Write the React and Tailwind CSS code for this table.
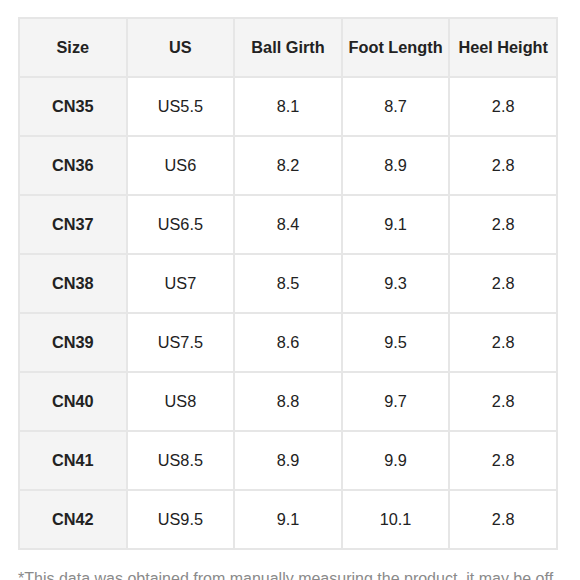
import React from 'react';

const headers = ['Size', 'US', 'Ball Girth', 'Foot Length', 'Heel Height'];

const rows = [
  ['CN35', 'US5.5', '8.1', '8.7', '2.8'],
  ['CN36', 'US6', '8.2', '8.9', '2.8'],
  ['CN37', 'US6.5', '8.4', '9.1', '2.8'],
  ['CN38', 'US7', '8.5', '9.3', '2.8'],
  ['CN39', 'US7.5', '8.6', '9.5', '2.8'],
  ['CN40', 'US8', '8.8', '9.7', '2.8'],
  ['CN41', 'US8.5', '8.9', '9.9', '2.8'],
  ['CN42', 'US9.5', '9.1', '10.1', '2.8'],
];

const App = () => {
  return (
    <div className="w-[580px] h-[580px] overflow-hidden bg-white font-['Liberation_Sans',Arial,sans-serif] text-[#222]">
      <div className="pt-[17px] pl-[18px]">
        <table className="w-[540px] border-collapse table-fixed text-[16.3px]">
          <thead>
            <tr className="h-[59px]">
              {headers.map((h) => (
                <th
                  key={h}
                  className="border-2 border-[#e6e6e6] bg-[#f4f4f4] font-bold text-center p-0"
                >
                  {h}
                </th>
              ))}
            </tr>
          </thead>
          <tbody>
            {rows.map((r) => (
              <tr key={r[0]} className="h-[59px]">
                {r.map((c, idx) => (
                  <td
                    key={idx}
                    className={
                      idx === 0
                        ? 'border-2 border-[#e6e6e6] bg-[#f4f4f4] font-bold text-center p-0'
                        : 'border-2 border-[#e6e6e6] text-center p-0'
                    }
                  >
                    {c}
                  </td>
                ))}
              </tr>
            ))}
          </tbody>
        </table>
        <p className="w-[545px] mt-[18px] text-[16px] text-[#8a8a8a] leading-[22px]">
          *This data was obtained from manually measuring the product, it may be off by 1-2 CM.
        </p>
      </div>
    </div>
  );
};

export default App;
